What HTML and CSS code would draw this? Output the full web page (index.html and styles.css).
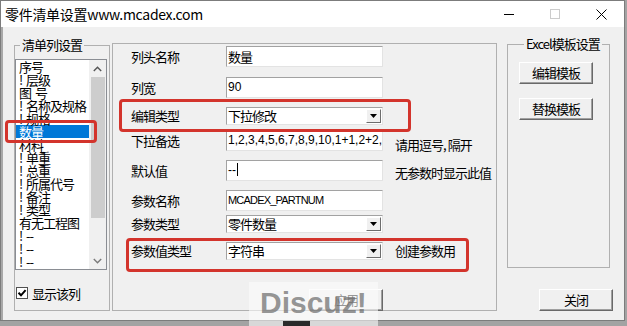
FILE: index.html
```html
<!DOCTYPE html>
<html lang="zh-CN">
<head>
<meta charset="utf-8">
<title>零件清单设置</title>
<link rel="stylesheet" href="styles.css">
</head>
<body>
<div class="window">
  <div class="titlebar">
    <span class="title">零件清单设置www.mcadex.com</span>
    <div class="caption-btns">
      <span class="cbtn"><svg width="10" height="10" viewBox="0 0 10 10"><path d="M0 5.5H10" stroke="#000" stroke-width="1"/></svg></span>
      <span class="cbtn"><svg width="10" height="10" viewBox="0 0 10 10"><rect x="0.5" y="0.5" width="9" height="9" fill="none" stroke="#cccccc" stroke-width="1"/></svg></span>
      <span class="cbtn"><svg width="11" height="11" viewBox="0 0 11 11"><path d="M0.5 0.5L10.5 10.5M10.5 0.5L0.5 10.5" stroke="#000" stroke-width="1"/></svg></span>
    </div>
  </div>
  <div class="client">
    <fieldset class="group group-list">
      <legend>清单列设置</legend>
      <div class="listbox">
        <ul class="items">
          <li>序号</li>
          <li>! 层级</li>
          <li>图 号</li>
          <li>! 名称及规格</li>
          <li>! 规格</li>
          <li class="sel">数量</li>
          <li>材料</li>
          <li>! 单重</li>
          <li>! 总重</li>
          <li>! 所属代号</li>
          <li>! 备注</li>
          <li>! 类型</li>
          <li>有无工程图</li>
          <li>! --</li>
          <li>! --</li>
          <li>! --</li>
        </ul>
        <div class="vscroll">
          <div class="sb-btn"><svg width="9" height="6" viewBox="0 0 9 6"><path d="M0.8 5L4.5 1.3L8.2 5" fill="none" stroke="#555" stroke-width="1.4"/></svg></div>
          <div class="sb-thumb"></div>
          <div class="sb-track"></div>
          <div class="sb-btn"><svg width="9" height="6" viewBox="0 0 9 6"><path d="M0.8 1L4.5 4.7L8.2 1" fill="none" stroke="#7a7a7a" stroke-width="1.4"/></svg></div>
        </div>
      </div>
      <div class="check">
        <svg class="checkbox" width="12" height="12" viewBox="0 0 12 12"><rect x="0.5" y="0.5" width="11" height="11" fill="#fff" stroke="#505050"/><path d="M2.5 5.8L5 8.3L9.6 3.2" fill="none" stroke="#000" stroke-width="2"/></svg>
        <span>显示该列</span>
      </div>
    </fieldset>

    <div class="group group-props">
      <div class="props">
        <div class="lbl">列头名称</div>
        <div class="edit">数量</div>
        <div class="note"></div>

        <div class="lbl">列宽</div>
        <div class="edit latin">90</div>
        <div class="note"></div>

        <div class="lbl lbl-c">编辑类型</div>
        <div class="combo"><span class="combo-text">下拉修改</span><span class="dd"><svg width="7" height="4" viewBox="0 0 7 4"><path d="M0 0H7L3.5 4Z" fill="#000"/></svg></span></div>
        <div class="note"></div>

        <div class="lbl">下拉备选</div>
        <div class="edit latin">1,2,3,4,5,6,7,8,9,10,1+1,2+2,</div>
        <div class="note note-low">请用逗号<span class="comma">,</span>隔开</div>

        <div class="lbl">默认值</div>
        <div class="edit latin">--<span class="caret"></span></div>
        <div class="note note-mid">无参数时显示此值</div>

        <div class="lbl">参数名称</div>
        <div class="edit latin narrow">MCADEX_PARTNUM</div>
        <div class="note"></div>

        <div class="lbl lbl-c">参数类型</div>
        <div class="combo"><span class="combo-text">零件数量</span><span class="dd"><svg width="7" height="4" viewBox="0 0 7 4"><path d="M0 0H7L3.5 4Z" fill="#000"/></svg></span></div>
        <div class="note"></div>

        <div class="lbl lbl-c">参数值类型</div>
        <div class="combo"><span class="combo-text">字符串</span><span class="dd"><svg width="7" height="4" viewBox="0 0 7 4"><path d="M0 0H7L3.5 4Z" fill="#000"/></svg></span></div>
        <div class="note note-c">创建参数用</div>

        <button class="btn btn-apply">应用</button>
      </div>
    </div>

    <div class="right-col">
      <fieldset class="group group-excel">
        <legend>Excel模板设置</legend>
        <button class="btn">编辑模板</button>
        <button class="btn btn-second">替换模板</button>
      </fieldset>
      <button class="btn btn-close">关闭</button>
    </div>
  </div>
</div>

<div class="mark mark-1"></div>
<div class="mark mark-2"></div>
<div class="mark mark-3"></div>
<div class="watermark">Discuz!</div>
<div class="artifact"></div>
</body>
</html>
```

FILE: styles.css
```css
* { box-sizing: border-box; }
html, body { margin: 0; padding: 0; }
body {
  width: 627px;
  height: 326px;
  overflow: hidden;
  position: relative;
  background: #a3a3a3;
  font-family: "Noto Sans CJK SC", "Noto Sans", sans-serif;
  color: #000;
}

.window {
  width: 625px;
  height: 321px;
  border: 1px solid #7c7c7c;
  background: #f0f0f0;
  display: flex;
  flex-direction: column;
}

.titlebar {
  flex: none;
  height: 26px;
  background: #fff;
  display: flex;
  align-items: center;
}
.title {
  margin-left: 4px;
  font-size: 14px;
  line-height: 16px;
  letter-spacing: -0.3px;
}
.caption-btns { margin-left: auto; display: flex; }
.cbtn {
  width: 46px;
  height: 26px;
  display: flex;
  align-items: center;
  justify-content: center;
}

.client {
  flex: 1;
  border-left: 2px solid #a8a8a8;
  display: flex;
  align-items: flex-start;
  padding-left: 11px;
  font-size: 13px;
  letter-spacing: -1px;
}

fieldset.group {
  margin: 0;
  padding: 0;
  min-width: 0;
  border: 1px solid #b0b0b0;
}
fieldset.group legend {
  padding: 0 2px;
  font-size: 13px;
  line-height: 16px;
}

/* left group */
.group-list {
  width: 96px;
  margin-top: 10px !important;
  padding: 6px 0 11px 0 !important;
}
.group-list legend { margin-left: 5px; }

.listbox {
  width: 92px;
  height: 211px;
  border: 1px solid #8a8d93;
  background: #fff;
  display: flex;
}
.items {
  flex: 1;
  margin: 0;
  padding: 0;
  list-style: none;
  overflow: hidden;
  font-size: 13px;
  line-height: 13px;
  word-spacing: 2px;
  white-space: nowrap;
}
.items li { height: 13px; padding-left: 3px; }
.items li.sel { background: #0078d7; color: #fff; }

.vscroll {
  width: 17px;
  display: flex;
  flex-direction: column;
  background: #f0f0f0;
}
.sb-btn {
  height: 17px;
  display: flex;
  align-items: center;
  justify-content: center;
}
.sb-thumb {
  height: 141px;
  margin: 0 1px 0 2px;
  background: #cdcdcd;
}
.sb-track { flex: 1; }

.check {
  margin-top: 17px;
  margin-left: 1px;
  display: flex;
  align-items: center;
  gap: 4px;
  height: 12px;
  line-height: 13px;
}
.checkbox { flex: none; }

/* middle group */
.group-props {
  width: 385px;
  height: 268px;
  margin-left: 2px;
  margin-top: 16px;
  border: 1px solid #b0b0b0;
  padding: 2px 0 0 18px;
}
.props {
  display: grid;
  grid-template-columns: 95px 157px 1fr;
  grid-template-rows: 31px 30px 23px 30px 30px 25px 27px 18px auto;
  align-items: start;
}
.lbl { line-height: 21px; white-space: nowrap; }
.lbl-c { line-height: 18px; }
.edit {
  height: 21px;
  background: #fff;
  border: 1px solid;
  border-color: #a2a2a2 #e3e3e3 #e3e3e3 #a2a2a2;
  padding-left: 1px;
  line-height: 19px;
  white-space: nowrap;
  overflow: hidden;
}
.edit.latin {
  font-family: "Liberation Sans", Arial, sans-serif;
  font-size: 12px;
  letter-spacing: 0;
}
.edit.narrow { font-size: 11px; letter-spacing: -0.8px; }
.caret {
  display: inline-block;
  width: 1px;
  height: 13px;
  background: #000;
  vertical-align: -2px;
  margin-left: 1px;
}
.combo {
  height: 18px;
  background: #fff;
  border: 1px solid;
  border-color: #a2a2a2 #e3e3e3 #e3e3e3 #a2a2a2;
  display: flex;
  align-items: center;
}
.combo-text { flex: 1; padding-left: 1px; line-height: 16px; white-space: nowrap; }
.dd {
  width: 15px;
  height: 14px;
  margin-right: 1px;
  background: #f0f0f0;
  border: 1px solid;
  border-color: #fff #6d6d6d #6d6d6d #fff;
  display: flex;
  align-items: center;
  justify-content: center;
}
.note { margin-left: 12px; line-height: 21px; white-space: nowrap; }
.note .comma { letter-spacing: 0; margin-right: 1px; }
.note-low { padding-top: 4px; }
.note-mid { padding-top: 2px; }
.note-c { line-height: 18px; }

.btn {
  display: block;
  width: 74px;
  height: 22px;
  margin: 0;
  padding: 0;
  font-family: "Noto Sans CJK SC", sans-serif;
  font-size: 13px;
  letter-spacing: -1px;
  line-height: 18px;
  color: #000;
  background: #f0f0f0;
  border: 1px solid;
  border-color: #fff #696969 #696969 #fff;
  box-shadow: inset -1px -1px 0 #a0a0a0;
}
.btn-apply {
  grid-column: 1 / 3;
  justify-self: end;
  margin-top: 29px;
}

/* right column */
.right-col {
  width: 106px;
  margin-left: 10px;
  display: flex;
  flex-direction: column;
  align-items: flex-start;
}
.group-excel {
  width: 103px;
  margin-top: 9px !important;
  padding: 10px 0 147px 11px !important;
}
.group-excel legend { margin-left: 5px; padding: 0 2px 0 1px; }
.btn-second { margin-top: 14px; }
.btn-close { align-self: flex-end; margin-top: 21px; }

/* overlays: annotation boxes and watermark */
.mark {
  position: absolute;
  border: 3px solid #d3342c;
  border-radius: 4px;
}
.mark-1 { left: 5px; top: 120px; width: 92px; height: 23px; }
.mark-2 { left: 119px; top: 99px; width: 292px; height: 33px; }
.mark-3 { left: 126px; top: 238px; width: 343px; height: 34px; }

.watermark {
  position: absolute;
  left: 249px;
  top: 282px;
  width: 129px;
  height: 44px;
  padding-left: 11px;
  background: rgba(252, 252, 252, 0.6);
  font-family: "Liberation Sans", Arial, sans-serif;
  font-weight: bold;
  font-size: 30px;
  line-height: 42px;
  color: rgba(105, 105, 105, 0.7);
}
.artifact {
  position: absolute;
  left: 283px;
  top: 321px;
  width: 27px;
  height: 5px;
  background: #2a2a2a;
}
```
